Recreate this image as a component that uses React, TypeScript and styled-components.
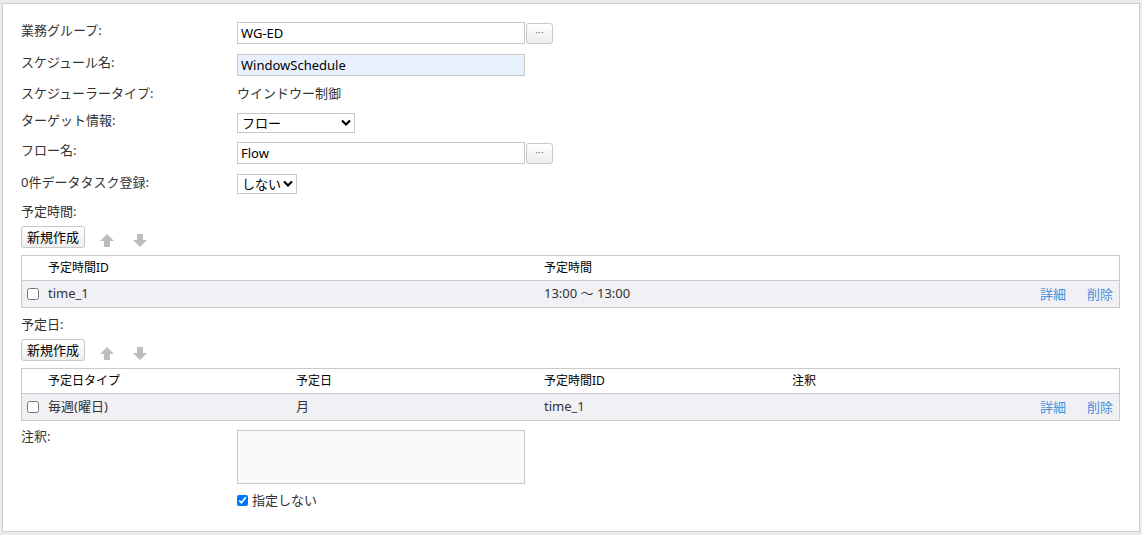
import React from "react";
import styled, { createGlobalStyle } from "styled-components";

const GlobalStyle = createGlobalStyle`
  html, body {
    margin: 0;
    padding: 0;
    background: #ebebef;
  }
  body {
    font-family: "Noto Sans", "Noto Sans CJK JP", sans-serif;
    font-size: 13px;
    color: #333;
  }
`;

const Page = styled.div`
  padding: 3px 2px 3px 2px;
`;

const Panel = styled.div`
  background: #fff;
  border: 1px solid #cfcfd2;
  padding: 18px 19px 21px 18px;
  height: 529px;
  box-sizing: border-box;
`;

const Row = styled.div<{ $h: number }>`
  display: grid;
  grid-template-columns: 216px 1fr;
  align-items: start;
  height: ${(p) => p.$h}px;
`;

const Label = styled.div<{ $dy?: number }>`
  line-height: 16px;
  margin-top: ${(p) => p.$dy ?? 0}px;
  color: #333;
`;

const Field = styled.div`
  display: flex;
  align-items: center;
`;

const TextInput = styled.input<{ $filled?: boolean }>`
  width: 288px;
  height: 22px;
  box-sizing: border-box;
  border: 1px solid #c8c8c8;
  padding: 0 3px 1px;
  font: inherit;
  font-size: 13px;
  color: #000;
  background: ${(p) => (p.$filled ? "#e8f0fe" : "#fff")};
  outline: none;
`;

const DotsButton = styled.button`
  width: 27px;
  height: 21px;
  margin-left: 1px;
  box-sizing: border-box;
  border: 1px solid #c8c8c8;
  border-radius: 3px;
  background: linear-gradient(#fff, #ececec);
  font-family: "DejaVu Sans", sans-serif;
  font-size: 9px;
  line-height: 19px;
  padding: 0;
  color: #555;
`;

const SelectWrap = styled.div<{ $w: number }>`
  position: relative;
  width: ${(p) => p.$w}px;
  height: 20px;
`;

const NativeSelect = styled.select`
  appearance: none;
  width: 100%;
  height: 100%;
  box-sizing: border-box;
  border: 1px solid #c8c8c8;
  border-radius: 0;
  background: #fff;
  font: inherit;
  font-size: 13px;
  color: #000;
  padding: 0 12px 0 4px;
  outline: none;
`;

const Chevron = styled.svg`
  position: absolute;
  right: 4px;
  top: 6px;
  width: 10px;
  height: 8px;
  pointer-events: none;
`;

const PlainValue = styled.div<{ $dy?: number }>`
  line-height: 16px;
  margin-top: ${(p) => p.$dy ?? 0}px;
  color: #333;
`;

const SectionTitle = styled.div<{ $mt: number }>`
  margin-top: ${(p) => p.$mt}px;
  line-height: 16px;
  color: #333;
`;

const Toolbar = styled.div<{ $mt: number }>`
  margin-top: ${(p) => p.$mt}px;
  display: flex;
  align-items: center;
  height: 22px;
`;

const NewButton = styled.button`
  height: 22px;
  box-sizing: border-box;
  padding: 0 5px;
  border: 1px solid #c8c8c8;
  border-radius: 3px;
  background: linear-gradient(#fff, #eeeeee);
  font: inherit;
  font-size: 13px;
  line-height: 18px;
  color: #000;
`;

const ArrowIcon = styled.svg<{ $ml: number }>`
  width: 14px;
  height: 13px;
  margin-left: ${(p) => p.$ml}px;
  margin-top: 6px;
`;

const Table = styled.div<{ $mt: number }>`
  margin-top: ${(p) => p.$mt}px;
  border: 1px solid #cacaca;
`;

const TRow = styled.div<{ $cols: string; $head?: boolean }>`
  display: grid;
  grid-template-columns: ${(p) => p.$cols};
  align-items: center;
  box-sizing: border-box;
  height: ${(p) => (p.$head ? 24 : 27)}px;
  padding-bottom: ${(p) => (p.$head ? 0 : 2)}px;
  background: ${(p) => (p.$head ? "#fff" : "#f0f0f5")};
  border-top: ${(p) => (p.$head ? "none" : "1px solid #cacaca")};
  font-size: ${(p) => (p.$head ? 12 : 13)}px;
  color: ${(p) => (p.$head ? "#000" : "#333")};
`;

const Cell = styled.div`
  line-height: 16px;
  white-space: nowrap;
`;

const CheckCell = styled.div`
  display: flex;
  align-items: center;
  padding-left: 5px;
  padding-top: 2px;
`;

const RowCheck = styled.input`
  width: 12px;
  height: 12px;
  margin: 0;
`;

const Actions = styled.div`
  display: flex;
  gap: 21px;
  padding-right: 6px;
  justify-content: flex-end;
`;

const Link = styled.a`
  color: #4a90d9;
  text-decoration: none;
  cursor: pointer;
`;

const TextArea = styled.textarea`
  width: 288px;
  height: 54px;
  box-sizing: border-box;
  border: 1px solid #c8c8c8;
  background: #fafafa;
  resize: none;
  outline: none;
  font: inherit;
  display: block;
`;

const CheckLine = styled.label`
  display: flex;
  align-items: center;
  gap: 4px;
  margin-top: 8px;
  margin-left: 216px;
  line-height: 16px;
  color: #333;
`;

const ChevronDown = () => (
  <Chevron viewBox="0 0 10 8">
    <path d="M1 1.5 L5 5.5 L9 1.5" fill="none" stroke="#000" strokeWidth="2.2" />
  </Chevron>
);

const Select: React.FC<{ width: number; value: string }> = ({ width, value }) => (
  <SelectWrap $w={width}>
    <NativeSelect defaultValue={value}>
      <option>{value}</option>
    </NativeSelect>
    <ChevronDown />
  </SelectWrap>
);

const UpArrow: React.FC<{ ml: number }> = ({ ml }) => (
  <ArrowIcon $ml={ml} viewBox="0 0 14 13">
    <path d="M7 0 L14 7 L10 7 L10 13 L4 13 L4 7 L0 7 Z" fill="#bdbdbd" />
  </ArrowIcon>
);

const DownArrow: React.FC<{ ml: number }> = ({ ml }) => (
  <ArrowIcon $ml={ml} viewBox="0 0 14 13">
    <path d="M4 0 L10 0 L10 6 L14 6 L7 13 L0 6 L4 6 Z" fill="#bdbdbd" />
  </ArrowIcon>
);

const timeCols = "26px 496px 1fr 120px";
const dayCols = "26px 248px 248px 248px 1fr 120px";

const App: React.FC = () => {
  return (
    <>
      <GlobalStyle />
      <Page>
        <Panel>
          <Row $h={32}>
            <Label>業務グループ:</Label>
            <Field>
              <TextInput defaultValue="WG-ED" />
              <DotsButton>···</DotsButton>
            </Field>
          </Row>
          <Row $h={32}>
            <Label>スケジュール名:</Label>
            <Field>
              <TextInput $filled defaultValue="WindowSchedule" />
            </Field>
          </Row>
          <Row $h={26}>
            <Label $dy={-1}>スケジューラータイプ:</Label>
            <PlainValue $dy={-1}>ウインドウー制御</PlainValue>
          </Row>
          <Row $h={30}>
            <Label>ターゲット情報:</Label>
            <Field style={{ paddingTop: 1 }}>
              <Select width={118} value="フロー" />
            </Field>
          </Row>
          <Row $h={32}>
            <Label>フロー名:</Label>
            <Field>
              <TextInput defaultValue="Flow" />
              <DotsButton>···</DotsButton>
            </Field>
          </Row>
          <Row $h={20}>
            <Label>0件データタスク登録:</Label>
            <Field>
              <Select width={60} value="しない" />
            </Field>
          </Row>

          <SectionTitle $mt={9}>予定時間:</SectionTitle>
          <Toolbar $mt={7}>
            <NewButton>新規作成</NewButton>
            <UpArrow ml={15} />
            <DownArrow ml={19} />
          </Toolbar>
          <Table $mt={7}>
            <TRow $cols={timeCols} $head>
              <span />
              <Cell>予定時間ID</Cell>
              <Cell>予定時間</Cell>
              <span />
            </TRow>
            <TRow $cols={timeCols}>
              <CheckCell>
                <RowCheck type="checkbox" />
              </CheckCell>
              <Cell>time_1</Cell>
              <Cell>13:00 ～ 13:00</Cell>
              <Actions>
                <Link>詳細</Link>
                <Link>削除</Link>
              </Actions>
            </TRow>
          </Table>

          <SectionTitle $mt={8}>予定日:</SectionTitle>
          <Toolbar $mt={7}>
            <NewButton>新規作成</NewButton>
            <UpArrow ml={15} />
            <DownArrow ml={19} />
          </Toolbar>
          <Table $mt={7}>
            <TRow $cols={dayCols} $head>
              <span />
              <Cell>予定日タイプ</Cell>
              <Cell>予定日</Cell>
              <Cell>予定時間ID</Cell>
              <Cell>注釈</Cell>
              <span />
            </TRow>
            <TRow $cols={dayCols}>
              <CheckCell>
                <RowCheck type="checkbox" />
              </CheckCell>
              <Cell>毎週(曜日)</Cell>
              <Cell>月</Cell>
              <Cell>time_1</Cell>
              <Cell />
              <Actions>
                <Link>詳細</Link>
                <Link>削除</Link>
              </Actions>
            </TRow>
          </Table>

          <Row $h={54} style={{ marginTop: 9 }}>
            <Label $dy={-2}>注釈:</Label>
            <TextArea />
          </Row>
          <CheckLine>
            <RowCheck type="checkbox" defaultChecked style={{ width: 11, height: 11 }} />
            指定しない
          </CheckLine>
        </Panel>
      </Page>
    </>
  );
};

export default App;
